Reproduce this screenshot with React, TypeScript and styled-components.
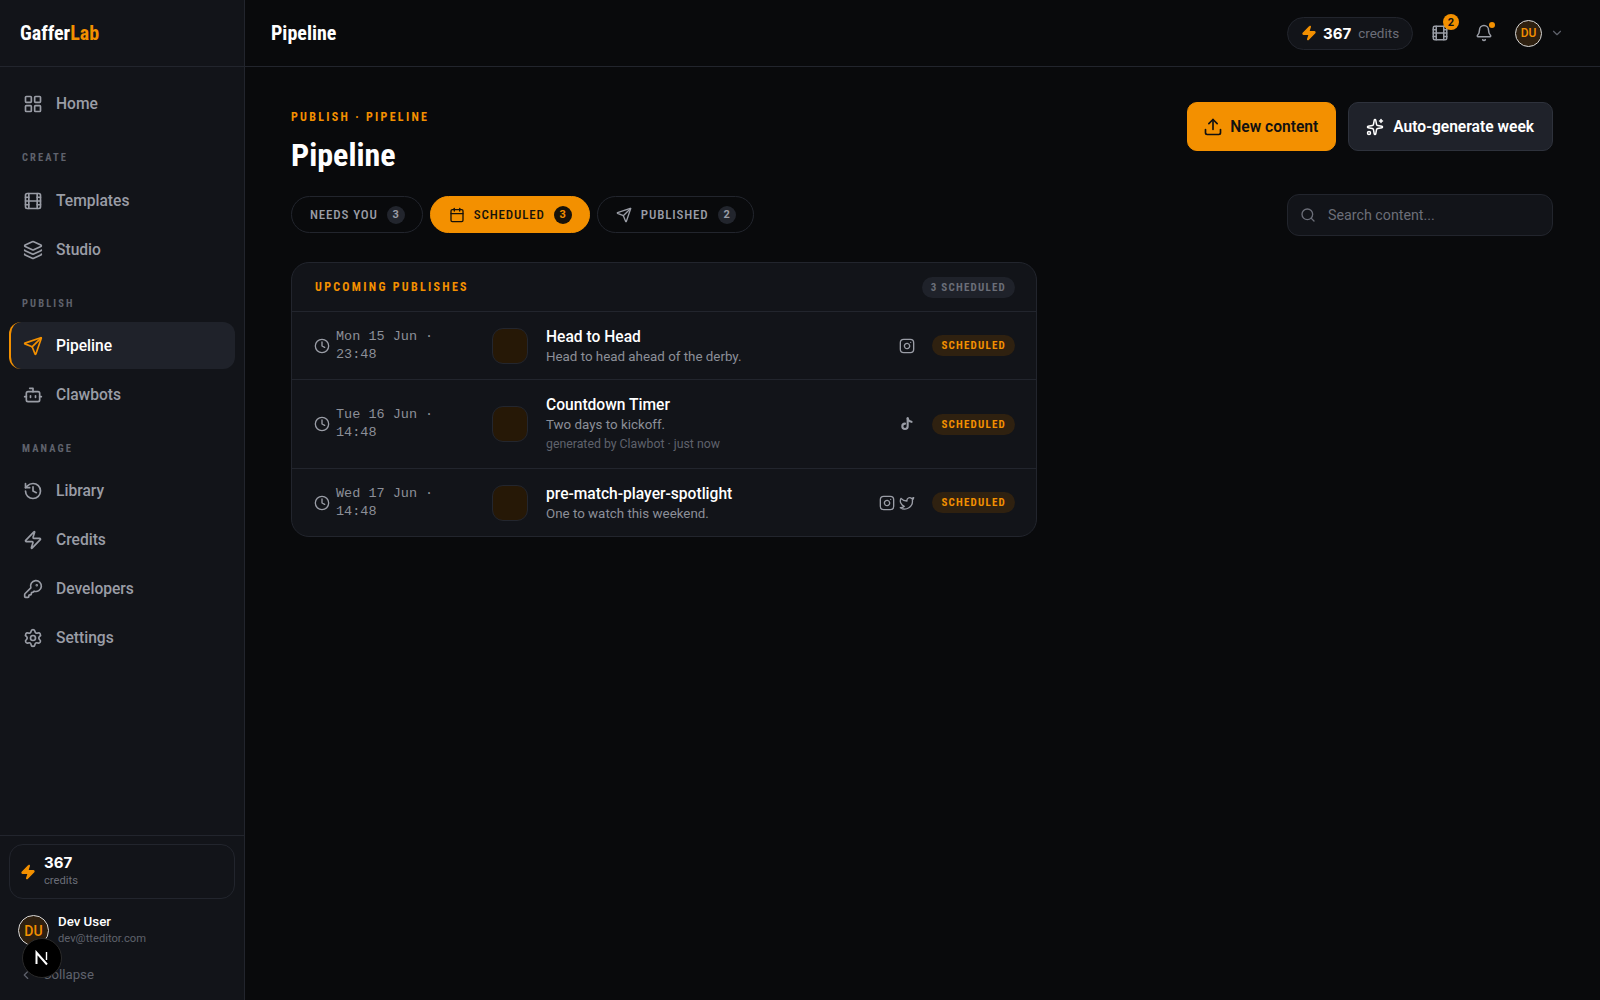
import React from "react";
import styled, { createGlobalStyle } from "styled-components";
import {
  LayoutGrid, Film, Layers, Send, Bot, History, Zap, KeyRound, Settings, Upload, Sparkles,
  Calendar, Clock, Instagram, Twitter, Search, Bell, ChevronDown, ChevronLeft,
} from "lucide-react";

const amber = "#f39000";
const line = "#22252d";
const page = "#090a0c";
const panel = "#121419";
const muted = "#9a9da6";
const dim = "#5f626c";

const Global = createGlobalStyle`
  html, body { margin: 0; height: 100%; background: ${page}; }
  body { font-family: Roboto, "Liberation Sans", sans-serif; color: #fff; overflow: hidden; }
  * { box-sizing: border-box; }
`;

const Shell = styled.div`display: flex; height: 1000px; width: 1600px; background: ${page};`;
const Sidebar = styled.aside`
  position: relative; width: 245px; flex: none; display: flex; flex-direction: column;
  background: ${panel}; border-right: 1px solid ${line};
`;
const Brand = styled.div`
  height: 67px; flex: none; padding: 0 20px; display: flex; align-items: center; border-bottom: 1px solid ${line};
  font-size: 20px; font-weight: 700; font-stretch: 75%;
`;
const BrandAccent = styled.span`color: ${amber};`;
const Nav = styled.nav`padding: 13px 9px 0; display: flex; flex-direction: column; gap: 2px;`;
const NavItem = styled.div<{ $active?: boolean }>`
  height: 47px; display: flex; align-items: center; gap: 13px; padding-left: 12px;
  border-radius: 12px; font-size: 15.6px; font-weight: 550;
  color: ${(p) => (p.$active ? "#fff" : muted)};
  background: ${(p) => (p.$active ? "#1f222a" : "transparent")};
  border-left: 2px solid ${(p) => (p.$active ? amber : "transparent")};
  svg { color: ${(p) => (p.$active ? amber : muted)}; flex: none; }
`;
const NavLabel = styled.div<{ $h: number }>`
  height: ${(p) => p.$h}px; padding: 22px 0 0 13px; font-size: 10.5px; font-weight: 700; font-stretch: 75%;
  letter-spacing: 0.2em; color: ${dim}; line-height: 13px;
`;
const SideFoot = styled.div`margin-top: auto; border-top: 1px solid ${line}; padding: 8px 9px 0; height: 165px;`;
const CreditBox = styled.div`
  height: 55px; border: 1px solid ${line}; border-radius: 14px; display: flex; align-items: center; gap: 8px; padding-left: 10px;
  svg { color: ${amber}; fill: ${amber}; flex: none; }
`;
const CreditNum = styled.div`font-family: Inter, sans-serif; font-size: 15px; font-weight: 700; line-height: 18px;`;
const CreditSub = styled.div`font-size: 11.2px; color: #6b6e78; line-height: 18px;`;
const UserRow = styled.div`display: flex; gap: 9px; padding: 16px 0 0 9px; align-items: flex-start;`;
const Avatar = styled.div<{ $size: number; $font: number }>`
  width: ${(p) => p.$size}px; height: ${(p) => p.$size}px; border-radius: 50%; flex: none;
  display: flex; align-items: center; justify-content: center; background: #2e2010;
  border: 1px solid #d8d8d8; color: ${amber}; font-weight: 500; font-size: ${(p) => p.$font}px;
`;
const UserName = styled.div`font-size: 13.3px; font-weight: 460; line-height: 17px; margin-top: -2px;`;
const UserMail = styled.div`font-size: 11.2px; color: ${dim}; line-height: 17px;`;
const Collapse = styled.div`
  display: flex; align-items: center; gap: 10px; padding: 20px 0 0 10px; color: ${dim}; font-size: 13.2px;
`;
const DevBadge = styled.div`
  position: absolute; left: 22px; top: 938px; width: 40px; height: 40px; border-radius: 50%;
  background: #000; border: 1px solid #2a2a2a; display: flex; align-items: center; justify-content: center;
`;

const Main = styled.main`flex: 1; min-width: 0; display: flex; flex-direction: column;`;
const Topbar = styled.header`
  height: 67px; flex: none; display: flex; align-items: center; padding: 0 36px 0 26px; border-bottom: 1px solid ${line};
`;
const TopTitle = styled.div`font-size: 20px; font-weight: 700; font-stretch: 75%; margin-right: auto;`;
const CreditPill = styled.div`
  height: 33px; width: 126px; border: 1px solid ${line}; border-radius: 17px; background: ${panel};
  display: flex; align-items: center; padding-left: 13px; gap: 6px;
  svg { color: ${amber}; fill: ${amber}; }
`;
const PillNum = styled.span`font-family: Inter, sans-serif; font-size: 15px; font-weight: 700;`;
const PillSub = styled.span`font-size: 13.5px; color: #6b6e78; margin-left: 1px;`;
const IconSlot = styled.div<{ $gap: number }>`position: relative; display: flex; color: ${muted}; margin-left: ${(p) => p.$gap}px;`;
const CountDot = styled.span`
  position: absolute; left: 12px; top: -10px; width: 16px; height: 16px; border-radius: 50%; background: ${amber};
  color: #111; font-size: 11px; font-weight: 700; display: flex; align-items: center; justify-content: center;
`;
const NotifyDot = styled.span`
  position: absolute; left: 14px; top: -2px; width: 6px; height: 6px; border-radius: 50%; background: ${amber};
`;
const TopAvatar = styled.div`margin-left: 22px; display: flex; align-items: center; gap: 8px; color: ${dim};`;

const Content = styled.div`padding: 35px 47px 0 46px; flex: 1;`;
const HeadRow = styled.div`display: flex; justify-content: space-between; align-items: flex-start;`;
const Eyebrow = styled.div`
  font-size: 12px; font-weight: 700; font-stretch: 75%; letter-spacing: 0.19em; color: ${amber}; line-height: 16px; margin-top: 7px;
`;
const Title = styled.h1`margin: 8px 0 0; font-size: 32px; line-height: 44px; font-weight: 700; font-stretch: 75%;`;
const Actions = styled.div`display: flex; gap: 12px;`;
const Button = styled.div<{ $primary?: boolean }>`
  height: 49px; padding: 0 ${(p) => (p.$primary ? 17 : 18)}px 0 ${(p) => (p.$primary ? 15 : 17)}px; border-radius: 10px;
  display: flex; align-items: center; gap: ${(p) => (p.$primary ? 7 : 9)}px;
  font-size: 15.6px; font-weight: 600;
  background: ${(p) => (p.$primary ? amber : "#1f222a")};
  color: ${(p) => (p.$primary ? "#111" : "#fff")};
  border: 1px solid ${(p) => (p.$primary ? amber : "#2e323c")};
`;
const ToolRow = styled.div`display: flex; justify-content: space-between; align-items: flex-start; margin-top: 17px;`;
const Tabs = styled.div`display: flex; gap: 7px; margin-top: 2px;`;
const Tab = styled.div<{ $active?: boolean }>`
  height: 37px; padding: 0 17px 0 18px; border-radius: 19px; display: flex; align-items: center; gap: 9px;
  font-size: 13px; font-weight: 500; font-stretch: 75%; letter-spacing: 0.065em;
  color: ${(p) => (p.$active ? "#17120a" : muted)};
  background: ${(p) => (p.$active ? amber : "transparent")};
  border: 1px solid ${(p) => (p.$active ? amber : line)};
`;
const TabCount = styled.span<{ $active?: boolean }>`
  width: 18px; height: 18px; border-radius: 50%; display: flex; align-items: center; justify-content: center;
  font-size: 11px; font-weight: 700; letter-spacing: 0; font-stretch: 100%;
  background: ${(p) => (p.$active ? "#17120a" : "#22252d")};
  color: ${(p) => (p.$active ? amber : muted)};
`;
const SearchBox = styled.div`
  width: 266px; height: 42px; border-radius: 12px; border: 1px solid ${line}; background: ${panel};
  display: flex; align-items: center; gap: 12px; padding-left: 12px; color: #6b6e78; font-size: 14.25px;
`;
const Card = styled.section`
  width: 746px; margin-top: 26px; border: 1px solid ${line}; border-radius: 18px; background: ${panel}; overflow: hidden;
`;
const CardHead = styled.div`
  height: 48px; display: flex; align-items: center; justify-content: space-between; padding: 0 21px 0 23px;
`;
const CardTitle = styled.div`font-size: 12px; font-weight: 700; font-stretch: 75%; letter-spacing: 0.19em; color: ${amber};`;
const Tag = styled.span<{ $amber?: boolean }>`
  height: 21px; padding: 0 9px; border-radius: 11px; display: inline-flex; align-items: center;
  font-size: 11px; font-weight: 700; font-stretch: 75%; letter-spacing: 0.11em;
  background: ${(p) => (p.$amber ? "#2f2110" : "#1f222a")};
  color: ${(p) => (p.$amber ? amber : "#6b6e78")};
`;
const Row = styled.div<{ $tall?: boolean }>`
  display: flex; align-items: center; padding: 0 21px 0 22px; border-top: 1px solid ${line};
  height: ${(p) => (p.$tall ? 89 : 68)}px;
`;
const When = styled.div`
  width: 162px; flex: none; margin-right: 16px; display: flex; align-items: center; gap: 6px; color: ${muted};
  svg { flex: none; }
`;
const WhenText = styled.div`
  font-family: "Liberation Mono", monospace; font-size: 13.5px; line-height: 18px; width: 132px; color: #8c8f98;
`;
const Thumb = styled.div`
  width: 36px; height: 36px; border-radius: 11px; background: #261806; border: 1px solid #23262e; flex: none; margin-right: 18px;
`;
const RowBody = styled.div<{ $tall?: boolean }>`flex: 1; min-width: 0; padding-top: ${(p) => (p.$tall ? 0 : 2)}px;`;
const RowTitle = styled.div`font-size: 15.6px; font-weight: 470; line-height: 20px;`;
const RowSub = styled.div`font-size: 13.35px; color: #8c8f98; line-height: 19px;`;
const RowMeta = styled.div`font-size: 12.3px; color: ${dim}; line-height: 19px; margin-top: 1px;`;
const Platforms = styled.div`display: flex; gap: 4px; color: ${muted}; margin-right: 17px;`;

const TikTok = () => (
  <svg width="16" height="16" viewBox="0 0 24 24" fill="none" stroke="currentColor" strokeWidth="3.2" strokeLinecap="round" strokeLinejoin="round">
    <path d="M13 3.500v12a4 4 0 1 1-4-4" />
    <path d="M13 3.500c.4 2.800 2.400 4.700 5.800 5.200" />
  </svg>
);

const NextMark = () => (
  <svg width="16" height="16" viewBox="0 0 16 16" fill="none" stroke="#fff" strokeWidth="2">
    <path d="M2.500 14V2.500L13 14.500" />
    <path d="M12.500 2v8" strokeWidth="1.400" />
  </svg>
);

const rows = [
  { when: "Mon 15 Jun · 23:48", title: "Head to Head", sub: "Head to head ahead of the derby.", p: [<Instagram key="i" size={16} />] },
  { when: "Tue 16 Jun · 14:48", title: "Countdown Timer", sub: "Two days to kickoff.", meta: "generated by Clawbot · just now", p: [<TikTok key="t" />] },
  { when: "Wed 17 Jun · 14:48", title: "pre-match-player-spotlight", sub: "One to watch this weekend.", p: [<Instagram key="i" size={16} />, <Twitter key="x" size={16} />] },
];

export default function App() {
  return (
    <>
      <Global />
      <Shell>
        <Sidebar>
          <Brand>Gaffer<BrandAccent>Lab</BrandAccent></Brand>
          <Nav>
            <NavItem><LayoutGrid size={20} />Home</NavItem>
            <NavLabel $h={46}>CREATE</NavLabel>
            <NavItem><Film size={20} />Templates</NavItem>
            <NavItem><Layers size={20} />Studio</NavItem>
            <NavLabel $h={45}>PUBLISH</NavLabel>
            <NavItem $active><Send size={20} />Pipeline</NavItem>
            <NavItem><Bot size={20} />Clawbots</NavItem>
            <NavLabel $h={45.5}>MANAGE</NavLabel>
            <NavItem><History size={20} />Library</NavItem>
            <NavItem><Zap size={20} />Credits</NavItem>
            <NavItem><KeyRound size={20} />Developers</NavItem>
            <NavItem><Settings size={20} />Settings</NavItem>
          </Nav>
          <SideFoot>
            <CreditBox>
              <Zap size={16} />
              <div>
                <CreditNum>367</CreditNum>
                <CreditSub>credits</CreditSub>
              </div>
            </CreditBox>
            <UserRow>
              <Avatar $size={31} $font={14}>DU</Avatar>
              <div>
                <UserName>Dev User</UserName>
                <UserMail>dev@tteditor.com</UserMail>
              </div>
            </UserRow>
            <Collapse><ChevronLeft size={14} />Collapse</Collapse>
          </SideFoot>
          <DevBadge><NextMark /></DevBadge>
        </Sidebar>
        <Main>
          <Topbar>
            <TopTitle>Pipeline</TopTitle>
            <CreditPill><Zap size={16} /><PillNum>367</PillNum><PillSub>credits</PillSub></CreditPill>
            <IconSlot $gap={18}><Film size={18} /><CountDot>2</CountDot></IconSlot>
            <IconSlot $gap={26}><Bell size={18} /><NotifyDot /></IconSlot>
            <TopAvatar><Avatar $size={27} $font={12}>DU</Avatar><ChevronDown size={14} /></TopAvatar>
          </Topbar>
          <Content>
            <HeadRow>
              <div>
                <Eyebrow>PUBLISH · PIPELINE</Eyebrow>
                <Title>Pipeline</Title>
              </div>
              <Actions>
                <Button $primary><Upload size={20} />New content</Button>
                <Button><Sparkles size={18} />Auto-generate week</Button>
              </Actions>
            </HeadRow>
            <ToolRow>
              <Tabs>
                <Tab>NEEDS YOU<TabCount>3</TabCount></Tab>
                <Tab $active><Calendar size={16} />SCHEDULED<TabCount $active>3</TabCount></Tab>
                <Tab><Send size={16} />PUBLISHED<TabCount>2</TabCount></Tab>
              </Tabs>
              <SearchBox><Search size={16} />Search content...</SearchBox>
            </ToolRow>
            <Card>
              <CardHead>
                <CardTitle>UPCOMING PUBLISHES</CardTitle>
                <Tag>3 SCHEDULED</Tag>
              </CardHead>
              {rows.map((r) => (
                <Row key={r.title} $tall={!!r.meta}>
                  <When><Clock size={16} /><WhenText>{r.when}</WhenText></When>
                  <Thumb />
                  <RowBody $tall={!!r.meta}>
                    <RowTitle>{r.title}</RowTitle>
                    <RowSub>{r.sub}</RowSub>
                    {r.meta && <RowMeta>{r.meta}</RowMeta>}
                  </RowBody>
                  <Platforms>{r.p}</Platforms>
                  <Tag $amber>SCHEDULED</Tag>
                </Row>
              ))}
            </Card>
          </Content>
        </Main>
      </Shell>
    </>
  );
}
